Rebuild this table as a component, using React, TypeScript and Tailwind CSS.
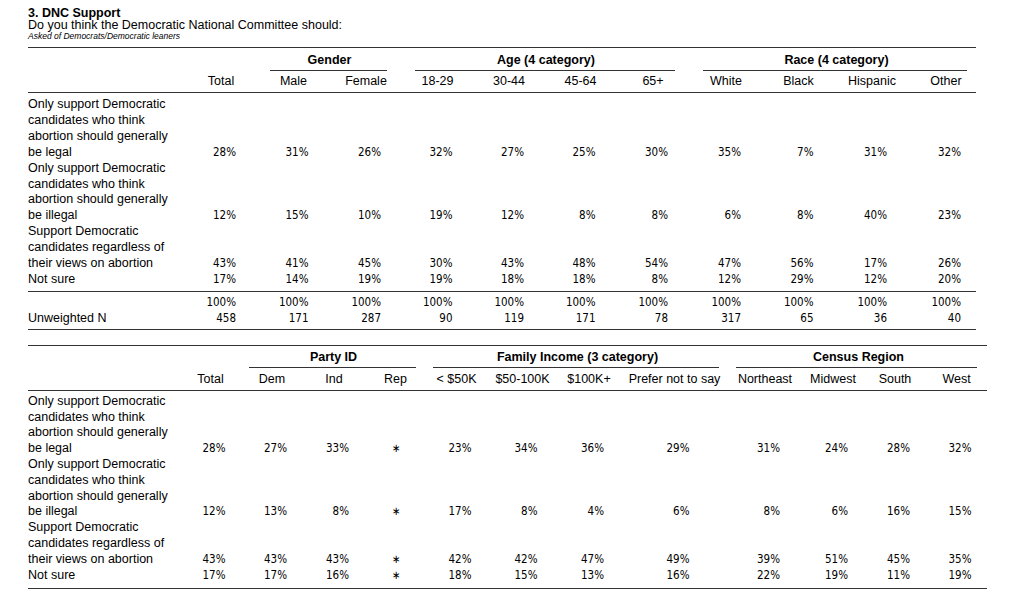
const sans = "font-['Liberation_Sans',Arial,sans-serif]";
const num = "font-['DejaVu_Sans_Condensed','DejaVu_Sans',sans-serif] text-[11.5px]";

type Row = { label: string[]; values: string[] };

const ROW_LABELS = [
  ['Only support Democratic', 'candidates who think', 'abortion should generally', 'be legal'],
  ['Only support Democratic', 'candidates who think', 'abortion should generally', 'be illegal'],
  ['Support Democratic', 'candidates regardless of', 'their views on abortion'],
  ['Not sure'],
];

const pct = (xs: (number | string)[]) => xs.map((x) => (typeof x === 'number' ? `${x}%` : x));

const t1Cols = ['Total', 'Male', 'Female', '18-29', '30-44', '45-64', '65+', 'White', 'Black', 'Hispanic', 'Other'];
const t1Rows: Row[] = [
  { label: ROW_LABELS[0], values: pct([28, 31, 26, 32, 27, 25, 30, 35, 7, 31, 32]) },
  { label: ROW_LABELS[1], values: pct([12, 15, 10, 19, 12, 8, 8, 6, 8, 40, 23]) },
  { label: ROW_LABELS[2], values: pct([43, 41, 45, 30, 43, 48, 54, 47, 56, 17, 26]) },
  { label: ROW_LABELS[3], values: pct([17, 14, 19, 19, 18, 18, 8, 12, 29, 12, 20]) },
];
const t1N = ['458', '171', '287', '90', '119', '171', '78', '317', '65', '36', '40'];

const t2Cols = ['Total', 'Dem', 'Ind', 'Rep', '< $50K', '$50-100K', '$100K+', 'Prefer not to say', 'Northeast', 'Midwest', 'South', 'West'];
const S = '∗';
const t2Rows: Row[] = [
  { label: ROW_LABELS[0], values: pct([28, 27, 33, S, 23, 34, 36, 29, 31, 24, 28, 32]) },
  { label: ROW_LABELS[1], values: pct([12, 13, 8, S, 17, 8, 4, 6, 8, 6, 16, 15]) },
  { label: ROW_LABELS[2], values: pct([43, 43, 43, S, 42, 42, 47, 49, 39, 51, 45, 35]) },
  { label: ROW_LABELS[3], values: pct([17, 17, 16, S, 18, 15, 13, 16, 22, 19, 11, 19]) },
];

function Rule({ className = '' }: { className?: string }) {
  return <div className={`h-px bg-[#333] ${className}`} />;
}

function Value({ v, leading }: { v: string; leading: string }) {
  if (v === S) {
    return <div className={`self-end text-center pl-px ${num} ${leading}`}>{v}</div>;
  }
  return (
    <div className="self-end">
      <div className={`mx-auto flex w-[30px] justify-end whitespace-nowrap ${num} ${leading}`}>{v}</div>
    </div>
  );
}

function Label({ lines, leading }: { lines: string[]; leading: string }) {
  return (
    <div>
      {lines.map((l, i) => (
        <div key={i} className={`whitespace-nowrap ${leading}`}>
          {l || '\u00a0'}
        </div>
      ))}
    </div>
  );
}

function GroupHead({ label, span, inset }: { label: string; span: string; inset: string }) {
  return (
    <div className={span}>
      <div className="text-center font-bold leading-[16px]">{label}</div>
      <Rule className={`mt-[2px] ${inset}`} />
    </div>
  );
}

function TableOne() {
  const grid = 'grid grid-cols-[157px_72px_73px_72px_71px_72px_71px_74px_72px_73px_74px_74px]';
  const lh = 'leading-[15.9px]';
  return (
    <div className="mt-[6px] w-[955px]">
      <Rule className="w-[948px]" />
      <div className={`${grid} pt-[4px]`}>
        <div />
        <div />
        <GroupHead label="Gender" span="col-span-2" inset="ml-[13px] mr-[15px]" />
        <GroupHead label="Age (4 category)" span="col-span-4" inset="ml-[13px] mr-[15px]" />
        <GroupHead label="Race (4 category)" span="col-span-4" inset="ml-[13px] mr-[16px]" />
      </div>
      <div className={`${grid} mt-[2px]`}>
        <div />
        {t1Cols.map((c) => (
          <div key={c} className="text-center leading-[16px] whitespace-nowrap">
            {c}
          </div>
        ))}
      </div>
      <Rule className="mt-[3px] w-[948px]" />
      <div className={`${grid} pt-[4px]`}>
        {t1Rows.map((r, i) => (
          <div key={i} className="contents">
            <Label lines={r.label} leading={lh} />
            {r.values.map((v, j) => (
              <Value key={j} v={v} leading={lh} />
            ))}
          </div>
        ))}
      </div>
      <Rule className="mt-[3px] w-[948px]" />
      <div className={`${grid} pt-[2px]`}>
        <Label lines={['', 'Unweighted N']} leading="leading-[16px]" />
        {t1N.map((n, j) => (
          <div key={j} className="self-end">
            <div className={`mx-auto flex w-[30px] flex-col items-end whitespace-nowrap ${num} leading-[16px]`}>
              <span>100%</span>
              <span>{n}</span>
            </div>
          </div>
        ))}
      </div>
      <Rule className="mt-[3px] w-[948px]" />
    </div>
  );
}

function TableTwo() {
  const grid = 'grid grid-cols-[152px_61px_62px_62px_61px_61px_71px_62px_109px_72px_64px_60px_63px]';
  const lh = 'leading-[15.8px]';
  return (
    <div className="mt-[15px] w-[960px]">
      <Rule className="w-[959px]" />
      <div className={`${grid} pt-[3px]`}>
        <div />
        <div />
        <GroupHead label="Party ID" span="col-span-3" inset="ml-[8px] mr-[10px]" />
        <GroupHead label="Family Income (3 category)" span="col-span-4" inset="ml-[7px] mr-[10px]" />
        <GroupHead label="Census Region" span="col-span-4" inset="ml-[7px] mr-[11px]" />
      </div>
      <div className={`${grid} mt-[3px]`}>
        <div />
        {t2Cols.map((c) => (
          <div key={c} className="text-center leading-[16px] whitespace-nowrap">
            {c}
          </div>
        ))}
      </div>
      <Rule className="mt-[3px] w-[959px]" />
      <div className={`${grid} pt-[3px]`}>
        {t2Rows.map((r, i) => (
          <div key={i} className="contents">
            <Label lines={r.label} leading={lh} />
            {r.values.map((v, j) => (
              <Value key={j} v={v} leading={lh} />
            ))}
          </div>
        ))}
      </div>
      <Rule className="mt-[5px] w-[959px]" />
    </div>
  );
}

export default function App() {
  return (
    <div className={`min-h-[599px] w-[1012px] bg-white pl-[28px] pt-[7px] text-[12.5px] text-black ${sans}`}>
      <div className="font-bold leading-[12px]">3. DNC Support</div>
      <div className="leading-[12px]">Do you think the Democratic National Committee should:</div>
      <div className="text-[8.5px] italic leading-[10px]">Asked of Democrats/Democratic leaners</div>
      <TableOne />
      <TableTwo />
    </div>
  );
}
